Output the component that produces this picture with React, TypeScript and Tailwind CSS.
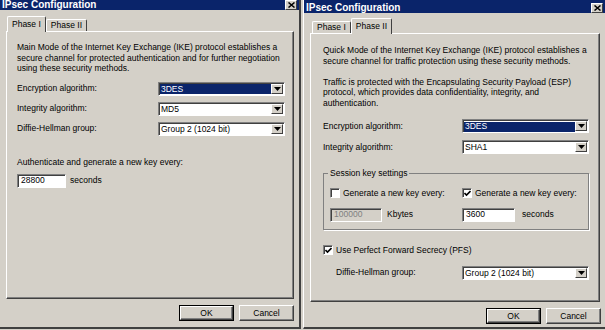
import React from "react";

const font = { fontFamily: '"Liberation Sans", Arial, sans-serif' };

function Arrow() {
  return (
    <svg width="7" height="4" viewBox="0 0 7 4">
      <path d="M0 0h7L3.5 4z" fill="#000" />
    </svg>
  );
}

function Dropdown({ value, selected, w = "w-[127px]" }: { value: string; selected?: boolean; w?: string }) {
  return (
    <div
      className={`${w} h-[14px] flex bg-white border border-t-[#808080] border-l-[#808080] border-r-white border-b-white shadow-[inset_1px_1px_0_#404040]`}
    >
      <div className="flex-1 flex items-center pl-[1px] pt-[1px]">
        <span
          className={`flex-1 h-[10px] flex items-center pl-[1px] ${selected ? "bg-[#0a246a] text-white" : "text-black"}`}
        >
          {value}
        </span>
      </div>
      <div className="w-[12px] my-[1px] mr-[1px] bg-[#d4d0c8] border border-t-white border-l-white border-r-[#404040] border-b-[#404040] flex items-center justify-center">
        <Arrow />
      </div>
    </div>
  );
}

function TextBox({ value, disabled, w = "w-[52px]" }: { value: string; disabled?: boolean; w?: string }) {
  return (
    <div
      className={`${w} h-[14px] flex items-center pl-[3px] border border-t-[#808080] border-l-[#808080] border-r-white border-b-white shadow-[inset_1px_1px_0_#404040] ${disabled ? "bg-[#d4d0c8] text-[#808080]" : "bg-white text-black"}`}
    >
      {value}
    </div>
  );
}

function Check({ checked }: { checked?: boolean }) {
  return (
    <div className="w-[10px] h-[10px] bg-white border border-t-[#808080] border-l-[#808080] border-r-white border-b-white shadow-[inset_1px_1px_0_#404040] flex items-center justify-center">
      {checked && (
        <svg width="7" height="7" viewBox="0 0 7 7">
          <path d="M0.5 3l2 2 4-4" stroke="#000" strokeWidth="1.6" fill="none" />
        </svg>
      )}
    </div>
  );
}

function Btn({ label, isDefault }: { label: string; isDefault?: boolean }) {
  return (
    <div className={`w-[55px] h-[16px] ${isDefault ? "border border-black" : ""}`}>
      <div className="w-full h-full bg-[#d4d0c8] border border-t-white border-l-white border-r-[#404040] border-b-[#404040] shadow-[inset_-1px_-1px_0_#808080] flex items-center justify-center">
        {label}
      </div>
    </div>
  );
}

function TitleBar({ h }: { h: string }) {
  return (
    <div className={`${h} bg-[#0a246a] flex items-end justify-between pl-[2px] pr-[2px] overflow-hidden`}>
      <span className="text-white font-bold text-[10px] leading-[10px]">IPsec Configuration</span>
      <div className="w-[12px] h-[10px] bg-[#d4d0c8] border border-t-white border-l-white border-r-[#404040] border-b-[#404040] flex items-center justify-center">
        <svg width="7" height="6" viewBox="0 0 7 6">
          <path d="M0.5 0.5l6 5M6.5 0.5l-6 5" stroke="#000" strokeWidth="1.5" />
        </svg>
      </div>
    </div>
  );
}

function Tab({ label, active }: { label: string; active?: boolean }) {
  return (
    <div
      className={`flex items-center px-[4px] bg-[#d4d0c8] border-t border-l border-r border-t-white border-l-white border-r-[#404040] rounded-t-[2px] ${active ? "h-[16px] relative z-10 -mb-px pb-px" : "h-[12px]"}`}
    >
      {label}
    </div>
  );
}

const panel =
  "bg-[#d4d0c8] border border-t-white border-l-white border-r-[#404040] border-b-[#404040] shadow-[inset_-1px_-1px_0_#808080]";

export default function App() {
  return (
    <div
      style={font}
      className="w-[605px] h-[330px] bg-[#d4d0c8] flex gap-[2px] text-[8.5px] text-black overflow-hidden"
    >
      {/* Phase I */}
      <div className="w-[301px] h-[329px] flex flex-col border-r-2 border-b-2 border-r-[#404040] border-b-[#404040]">
        <TitleBar h="h-[10px]" />
        <div className="flex items-end pl-[7px] pt-[6px]">
          <Tab label="Phase I" active />
          <Tab label="Phase II" />
        </div>
        <div className={`ml-[6px] w-[288px] h-[268px] ${panel} pl-[10px] pt-[10px]`}>
          <p className="leading-[10.5px] w-[265px]">
            Main Mode of the Internet Key Exchange (IKE) protocol establishes a secure channel for protected
            authentication and for further negotiation using these security methods.
          </p>
          <div className="mt-[8px] flex flex-col gap-[6px]">
            <div className="flex items-center justify-between pr-[8px]">
              <span>Encryption algorithm:</span>
              <Dropdown value="3DES" selected />
            </div>
            <div className="flex items-center justify-between pr-[8px]">
              <span>Integrity algorithm:</span>
              <Dropdown value="MD5" />
            </div>
            <div className="flex items-center justify-between pr-[8px]">
              <span>Diffie-Hellman group:</span>
              <Dropdown value="Group 2 (1024 bit)" />
            </div>
          </div>
          <p className="mt-[21px] leading-[11px]">Authenticate and generate a new key every:</p>
          <div className="mt-[6px] flex items-center gap-[4px]">
            <TextBox value="28800" w="w-[49px]" />
            <span>seconds</span>
          </div>
        </div>
        <div className="flex justify-end gap-[5px] pr-[5px] mt-[6px]">
          <Btn label="OK" isDefault />
          <Btn label="Cancel" />
        </div>
      </div>

      {/* Phase II */}
      <div className="w-[302px] h-[329px] flex flex-col border-l border-l-white border-b-2 border-b-[#404040]">
        <TitleBar h="h-[13px]" />
        <div className="flex items-end pl-[8px] pt-[5px]">
          <Tab label="Phase I" />
          <Tab label="Phase II" active />
        </div>
        <div className={`ml-[6px] w-[290px] h-[269px] ${panel} pl-[12px] pt-[11px]`}>
          <p className="leading-[10.5px] w-[265px]">
            Quick Mode of the Internet Key Exchange (IKE) protocol establishes a secure channel for traffic
            protection using these security methods.
          </p>
          <p className="mt-[10.5px] leading-[10.5px] w-[255px]">
            Traffic is protected with the Encapsulating Security Payload (ESP) protocol, which provides data
            confidentiality, integrity, and authentication.
          </p>
          <div className="mt-[11px] flex flex-col gap-[7px]">
            <div className="flex items-center justify-between pr-[10px]">
              <span>Encryption algorithm:</span>
              <Dropdown value="3DES" selected />
            </div>
            <div className="flex items-center justify-between pr-[10px]">
              <span>Integrity algorithm:</span>
              <Dropdown value="SHA1" />
            </div>
          </div>
          <fieldset className="mt-[13px] mr-[10px] h-[63px] border border-[#808080] shadow-[1px_1px_0_#fff] px-[6px] pt-[7px]">
            <legend className="px-[2px] -ml-[2px]">Session key settings</legend>
            <div className="flex">
              <div className="w-[132px] flex flex-col gap-[8px]">
                <div className="flex items-center gap-[3px]">
                  <Check />
                  <span>Generate a new key every:</span>
                </div>
                <div className="flex items-center gap-[5px]">
                  <TextBox value="100000" disabled />
                  <span>Kbytes</span>
                </div>
              </div>
              <div className="flex flex-col gap-[8px]">
                <div className="flex items-center gap-[3px]">
                  <Check checked />
                  <span>Generate a new key every:</span>
                </div>
                <div className="flex items-center gap-[7px]">
                  <TextBox value="3600" w="w-[53px]" />
                  <span>seconds</span>
                </div>
              </div>
            </div>
          </fieldset>
          <div className="mt-[14px] flex items-center gap-[3px]">
            <Check checked />
            <span>Use Perfect Forward Secrecy (PFS)</span>
          </div>
          <div className="mt-[9px] flex items-center justify-between pr-[10px] pl-[13px]">
            <span>Diffie-Hellman group:</span>
            <Dropdown value="Group 2 (1024 bit)" />
          </div>
        </div>
        <div className="flex justify-end gap-[5px] pr-[4px] mt-[6px]">
          <Btn label="OK" isDefault />
          <Btn label="Cancel" />
        </div>
      </div>
    </div>
  );
}
